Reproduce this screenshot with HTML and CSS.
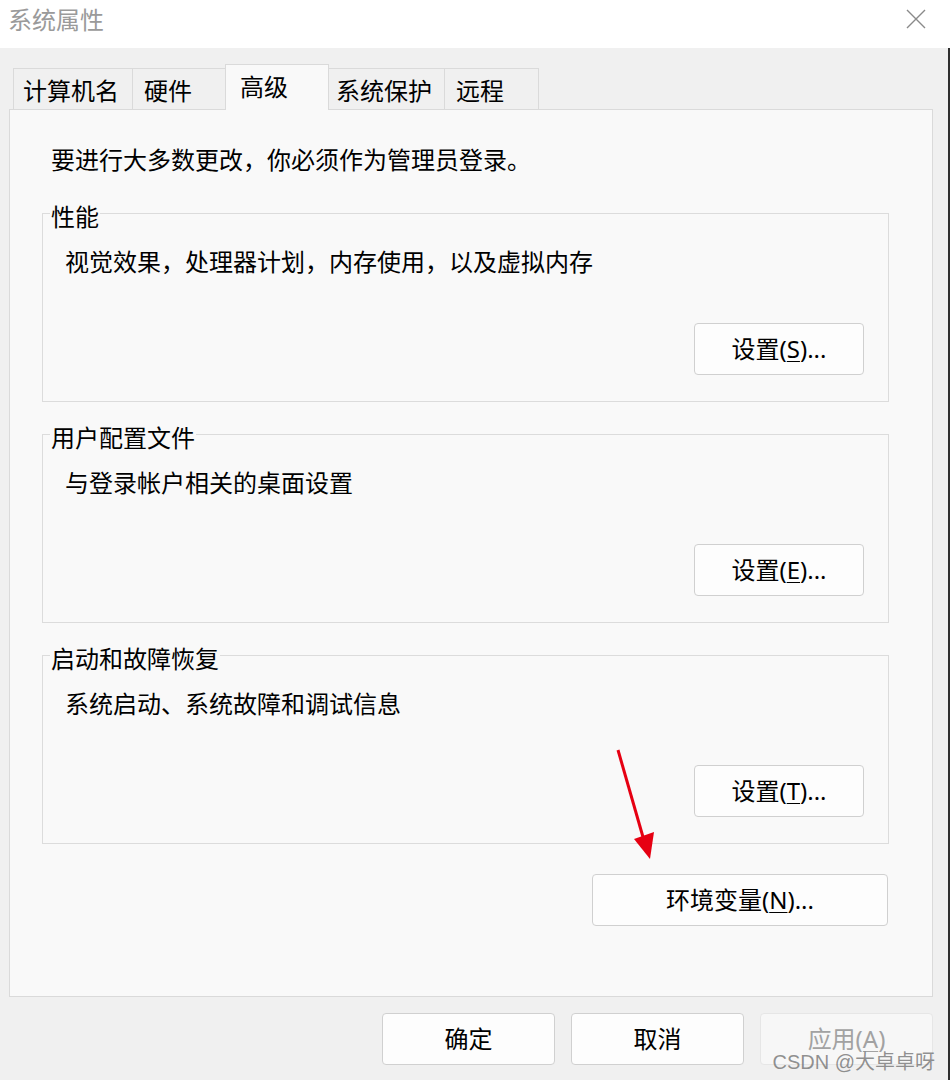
FILE: index.html
```html
<!DOCTYPE html>
<html lang="zh-CN">
<head>
<meta charset="utf-8">
<title>系统属性</title>
<link rel="stylesheet" href="styles.css">
</head>
<body>
<div class="window">
  <header class="titlebar">
    <span class="title">系统属性</span>
    <svg class="close" width="20" height="20" viewBox="0 0 20 20" aria-label="关闭"><path d="M1 1 L19 19 M19 1 L1 19" stroke="#8a8a8a" stroke-width="1.4" fill="none"/></svg>
  </header>
  <main class="client">
    <nav class="tabs">
      <div class="tab t1">计算机名</div>
      <div class="tab t2">硬件</div>
      <div class="tab t3 active">高级</div>
      <div class="tab t4">系统保护</div>
      <div class="tab t5">远程</div>
    </nav>
    <section class="panel">
      <p class="intro">要进行大多数更改，你必须作为管理员登录。</p>
      <fieldset class="group">
        <legend>性能</legend>
        <div class="group-body">
          <p class="desc">视觉效果，处理器计划，内存使用，以及虚拟内存</p>
          <button class="btn btn-set">设置(<u>S</u>)...</button>
        </div>
      </fieldset>
      <fieldset class="group">
        <legend>用户配置文件</legend>
        <div class="group-body">
          <p class="desc">与登录帐户相关的桌面设置</p>
          <button class="btn btn-set">设置(<u>E</u>)...</button>
        </div>
      </fieldset>
      <fieldset class="group">
        <legend>启动和故障恢复</legend>
        <div class="group-body">
          <p class="desc">系统启动、系统故障和调试信息</p>
          <button class="btn btn-set">设置(<u>T</u>)...</button>
        </div>
      </fieldset>
      <div class="env-row">
        <button class="btn btn-env">环境变量(<u>N</u>)...</button>
      </div>
    </section>
    <div class="actions">
      <button class="btn btn-dlg">确定</button>
      <button class="btn btn-dlg">取消</button>
      <button class="btn btn-dlg disabled">应用(<u>A</u>)</button>
    </div>
  </main>
  <svg class="arrow" width="80" height="130" viewBox="0 0 80 130">
    <line x1="18" y1="10" x2="43" y2="97" stroke="#e60012" stroke-width="3"/>
    <polygon points="34,99 54,92 50,119" fill="#e60012"/>
  </svg>
  <div class="watermark">CSDN @大卓卓呀</div>
</div>
</body>
</html>
```

FILE: styles.css
```css
* {
  box-sizing: border-box;
}

html,
body {
  margin: 0;
  padding: 0;
}

body {
  width: 950px;
  height: 1080px;
  overflow: hidden;
  background: #f0f0f0;
  font-family: "Noto Sans", "Noto Sans CJK SC", sans-serif;
  font-size: 24px;
  color: #000;
}

.window {
  position: relative;
  width: 950px;
  height: 1080px;
  display: flex;
  flex-direction: column;
}

.titlebar {
  height: 48px;
  flex: none;
  background: #fff;
  display: flex;
  justify-content: space-between;
  align-items: flex-start;
  padding: 4px 24px 0 8px;
}

.title {
  font-size: 24px;
  line-height: 32px;
  color: #9a9a9a;
}

.close {
  margin-top: 5px;
}

.client {
  flex: 1;
  background: #f0f0f0;
  padding: 16px 17px 0 9px;
  box-shadow: inset -2px 0 0 #2f2f2f;
}

.tabs {
  display: flex;
  align-items: flex-end;
  height: 45px;
  padding-left: 4px;
  position: relative;
  z-index: 1;
}

.tab {
  height: 41px;
  border: 1px solid #dadada;
  border-bottom: none;
  background: #f0f0f0;
  line-height: 32px;
  padding-top: 6px;
  white-space: nowrap;
  margin-left: -1px;
}

.tab:first-child {
  margin-left: 0;
}

.tab.active {
  height: 46px;
  margin-bottom: -1px;
  background: #f9f9f9;
  position: relative;
  z-index: 2;
}

.t1 { width: 120px; padding-left: 9px; }
.t2 { width: 94px; padding-left: 11px; }
.t3 { width: 104px; padding-left: 14px; }
.t4 { width: 117px; padding-left: 7px; }
.t5 { width: 95px; padding-left: 11px; }

.panel {
  height: 888px;
  background: #f9f9f9;
  border: 1px solid #dadada;
  padding: 34px 43px 0 32px;
}

.intro {
  margin: 0 0 0 9px;
  line-height: 32px;
}

.group {
  margin: 12px 0 0 0;
  padding: 13px 24px 26px 22px;
  border: 1px solid #dcdcdc;
  min-width: 0;
}

.intro + .group {
  margin-top: 17px;
}

.group legend {
  line-height: 32px;
  padding: 8px 1px 0 1px;
  margin-left: -15px;
}

.group-body {
  display: flex;
  flex-direction: column;
}

.desc {
  margin: 0;
  line-height: 32px;
}

.btn {
  font: inherit;
  color: #000;
  height: 52px;
  background: #fdfdfd;
  border: 1px solid #d0d0d0;
  border-radius: 4px;
  display: flex;
  align-items: center;
  justify-content: center;
  padding: 0;
  line-height: 26px;
  white-space: nowrap;
}

.btn u {
  text-decoration-thickness: 1px;
  text-underline-offset: 3px;
}

.btn-set {
  width: 170px;
  margin-top: 45px;
  align-self: flex-end;
}

.env-row {
  display: flex;
  justify-content: flex-end;
  margin-top: 30px;
  padding-right: 1px;
}

.btn-env {
  width: 296px;
}

.actions {
  display: flex;
  justify-content: flex-end;
  gap: 16px;
  margin-top: 16px;
}

.btn-dlg {
  width: 173px;
}

.btn-dlg.disabled {
  background: #f7f7f7;
  border-color: #e6e6e6;
  color: #a2a2a2;
}

.arrow {
  position: absolute;
  left: 600px;
  top: 740px;
}

.watermark {
  position: absolute;
  right: 15px;
  top: 1053px;
  font-family: "Liberation Sans", "Noto Sans CJK SC", sans-serif;
  font-size: 20px;
  line-height: 18px;
  color: rgba(110, 110, 110, 0.75);
  white-space: nowrap;
}
```
